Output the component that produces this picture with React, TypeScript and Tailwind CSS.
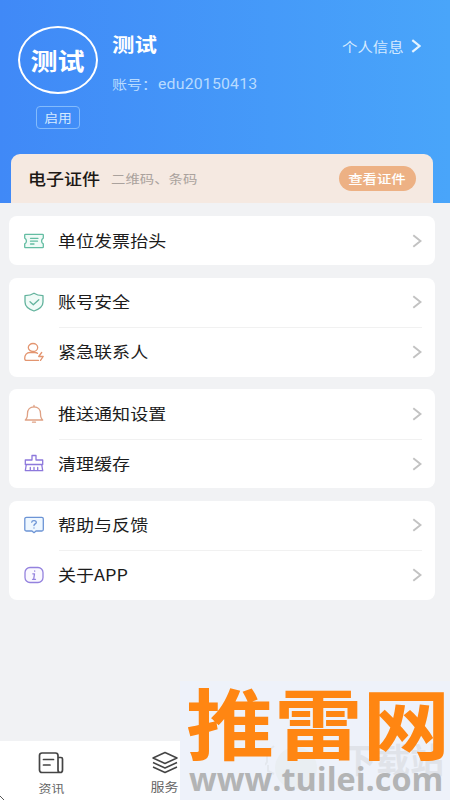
import React from "react";

const cjk = "font-['Noto_Sans_CJK_SC',sans-serif]";

function Wide({ children, className = "" }: { children: React.ReactNode; className?: string }) {
  return <span className={`block origin-left scale-x-[1.15] whitespace-nowrap ${className}`}>{children}</span>;
}

function Chevron({ className = "" }: { className?: string }) {
  return (
    <svg className={`h-[14px] w-[10px] shrink-0 ${className}`} viewBox="0 0 10 14" fill="none" stroke="currentColor">
      <path d="M1.300 1.200 8.500 7l-7.200 5.800" />
    </svg>
  );
}

function Icon({ color, children }: { color: string; children: React.ReactNode }) {
  return (
    <svg className={`h-5 w-[22px] shrink-0 ${color}`} viewBox="0 0 22 20" fill="none" stroke="currentColor" strokeWidth="1.3" strokeLinejoin="round" strokeLinecap="round">
      {children}
    </svg>
  );
}

const ticket = (
  <Icon color="text-[#63bda2]">
    <path d="M2.500 3.300h17c.5 0 .8.300.8.800v3c-2.300 1.200-2.300 4.600 0 5.800v3c0 .5-.3.800-.8.800h-17c-.5 0-.8-.3-.8-.8v-3c2.300-1.200 2.300-4.600 0-5.800v-3c0-.5.3-.8.800-.8z" fill="#f0fbf7" />
    <path d="M7.500 7.300h7.500M7.500 10.200h7M7.500 13h3.500" />
  </Icon>
);
const shield = (
  <Icon color="text-[#63b39d]">
    <path d="M11 1.200c2.500 1.700 5.500 2.300 9 2.500v6.300c0 4.500-4 7.300-9 9-5-1.700-9-4.500-9-9V3.700c3.500-.2 6.500-.8 9-2.500z" fill="#f0fbf7" />
    <path d="m7 9.700 3.300 3 5.500-5" />
  </Icon>
);
const contact = (
  <Icon color="text-[#e39570]">
    <ellipse cx="10" cy="5.500" rx="4.700" ry="4" />
    <path d="M14.500 11.300c-.8-.6-1.600-.8-2.500-.8H7c-3.300 0-5.300 2.500-5.300 6 0 1.200.6 1.900 1.800 1.900h12" />
    <path d="m18.700 10.500-3 4h4.500l-2.700 3.900" />
  </Icon>
);
const bell = (
  <Icon color="text-[#dfa184]">
    <path d="M2.300 16c1.700-1.300 2.200-3 2.200-6.500 0-4 2.500-6.700 6.500-6.700s6.500 2.700 6.500 6.700c0 3.500.5 5.200 2.200 6.500z" />
    <path d="M11 1.500v1.300M9.500 18.200h3" />
  </Icon>
);
const brush = (
  <Icon color="text-[#8d78dc]">
    <path d="M9 7V2.500h4V7h6.700v4.500H2.300V7zM3.300 11.500 2.300 17.700h17.400l-1-6.200M7.300 17.500v-3M11 17.500v-3M14.700 17.500v-3" />
  </Icon>
);
const help = (
  <Icon color="text-[#6c94d5]">
    <path d="M3.500 2.300h15.300c1 0 1.500.5 1.500 1.500v10.700c0 1-.5 1.500-1.500 1.500H13l-2 1.700L9 16H3.500c-1 0-1.700-.5-1.700-1.500V3.800c0-1 .7-1.500 1.700-1.500z" fill="#eef7ff" />
    <path d="M8.700 7.200c.2-2.200 4.600-2.200 4.600.2 0 1.500-2.300 1.500-2.300 3.200M11 13v.1" />
  </Icon>
);
const info = (
  <Icon color="text-[#9482de]">
    <rect x="2" y="2.500" width="18" height="15" rx="5" fill="#faf8ff" />
    <path d="M9.800 8.800h1.700l-.8 5.200M9.500 14.300h3M11.700 6v.2" />
  </Icon>
);

type Item = { icon: React.ReactNode; label: string };

function Group({ items, className }: { items: Item[]; className: string }) {
  return (
    <section className={`flex flex-col rounded-[8px] bg-white pl-[14px] pr-[13px] ${className}`}>
      {items.map((it, i) => (
        <div key={it.label} className="flex min-h-0 flex-1 items-center">
          {it.icon}
          <div className={`ml-[14px] flex h-full flex-1 items-center justify-between ${i > 0 ? "border-t border-[#f1f1f1]" : ""}`}>
            <Wide className="-ml-px text-[15.7px] text-[#1c1c1c]">{it.label}</Wide>
            <Chevron className="stroke-[1.9] text-[#c2c2c2]" />
          </div>
        </div>
      ))}
    </section>
  );
}

export default function App() {
  return (
    <div className={`relative flex h-[800px] w-[450px] flex-col overflow-hidden bg-[#f1f2f4] ${cjk}`}>
      <header className="flex h-[203px] shrink-0 flex-col bg-linear-to-r from-[#4089f7] to-[#49a5fa]">
        <div className="flex h-[154px] pl-[18px]">
          <div className="flex w-[80px] flex-col items-center pt-[26px]">
            <div className="flex h-[68px] w-[80px] items-center justify-center rounded-[50%] border-2 border-white text-[23.5px] font-bold text-white">
              <span className="mt-px mr-[2px] scale-x-[1.15]">测试</span>
            </div>
            <div className="mt-[12px] flex h-[23px] w-[44px] items-center justify-center rounded-[4px] border border-[#83bbfc] text-[12px] text-[#d5eaff]">
              <span className="scale-x-[1.15]">启用</span>
            </div>
          </div>
          <div className="ml-[14px] flex flex-1 flex-col pt-[30px]">
            <Wide className="text-[19.5px] leading-[28px] font-bold text-white">测试</Wide>
            <div className="mt-[16px] flex text-[13px] leading-[20px] text-[#b8dbff]">
              <Wide className="w-[46px]">账号：</Wide>
              <Wide className="font-['Roboto',sans-serif] text-[13.8px] tracking-[0.15px]">edu20150413</Wide>
            </div>
          </div>
          <div className="mt-[36px] mr-[29px] flex h-5 w-[79px] items-center justify-between text-[13.4px] text-[#d5eaff]">
            <Wide>个人信息</Wide>
            <Chevron className="stroke-[2.2] text-[#e4f3ff]" />
          </div>
        </div>
        <div className="mr-[17px] ml-[11px] flex h-[49px] items-center rounded-t-[9px] bg-[#f5e9e1] pr-[17px] pl-[17px]">
          <Wide className="pt-px text-[15.7px] font-medium text-[#1d1916]">电子证件</Wide>
          <Wide className="ml-[20px] pt-px text-[12.5px] text-[#aaa29d]">二维码、条码</Wide>
          <div className="ml-auto flex h-[25px] w-[77px] items-center justify-center rounded-full bg-[#edb184] pt-px text-[12.5px] font-medium text-white">
            <span className="scale-x-[1.15]">查看证件</span>
          </div>
        </div>
      </header>
      <main className="flex flex-1 flex-col gap-[12.5px] pt-[13px] pr-[15px] pl-[9px]">
        <Group className="h-[49px]" items={[{ icon: ticket, label: "单位发票抬头" }]} />
        <Group className="h-[99px]" items={[{ icon: shield, label: "账号安全" }, { icon: contact, label: "紧急联系人" }]} />
        <Group className="h-[99px]" items={[{ icon: bell, label: "推送通知设置" }, { icon: brush, label: "清理缓存" }]} />
        <Group className="h-[99px]" items={[{ icon: help, label: "帮助与反馈" }, { icon: info, label: "关于APP" }]} />
      </main>
      <nav className="flex h-[59px] shrink-0 bg-white text-[11.5px] text-[#666]">
        <div className="flex w-[102px] flex-col items-center pt-[10px]">
          <svg className="h-[24px] w-[28px]" viewBox="0 0 28 24" fill="none" stroke="#444" strokeWidth="1.7" strokeLinejoin="round" strokeLinecap="round">
            <path d="M5 2h13.500c1.500 0 2.500 1 2.500 2.500V19c0 1.600 1 2.500 2.200 2.500H5c-1.500 0-2.500-1-2.500-2.500V4.500C2.500 3 3.500 2 5 2zM21 6.500h3c1 0 1.500.6 1.500 1.500v11c0 1.700-1 2.500-2.300 2.500M6.500 8.500h10M6.500 14h6.500" />
          </svg>
          <span className="mt-[4px] scale-x-[1.12] leading-[18px]">资讯</span>
        </div>
        <div className="flex w-[126px] flex-col items-center pt-[10px]">
          <svg className="h-[24px] w-[28px]" viewBox="0 0 28 24" fill="none" stroke="#444" strokeWidth="1.5" strokeLinejoin="round">
            <path d="m14 1.500 12 5.500-12 5.500L2 7zM2 11.500l12 5.500 12-5.500M2 16l12 5.500L26 16" />
          </svg>
          <span className="mt-[3px] scale-x-[1.12] text-[12.5px] leading-[18px]">服务</span>
        </div>
      </nav>
      <svg className="absolute bottom-0 left-0 h-[5px] w-[5px]" viewBox="0 0 5 5" stroke="#555"><path d="m0 1 4 4" /></svg>
      <div className="absolute top-[681px] left-[180px] h-[119px] w-[270px] overflow-hidden bg-[#eef2fa]">
        <svg className="absolute top-[60px] left-[85px] h-[56px] w-[65px]" viewBox="0 0 65 56" fill="none">
          <circle cx="31" cy="27" r="21" fill="#e9eef2" />
          <path d="M9 5 2 11v10l-2 3M3 24v6l6 3" stroke="#e4e8ee" strokeWidth="2" />
        </svg>
        <div className="absolute top-[60px] left-[162px] text-[34px] leading-[36px] font-bold text-[#e0e3e9]">下载站</div>
        <div className="absolute top-[1px] left-[6px] origin-top-left scale-x-[1.025] scale-y-[0.9] text-[86px] leading-[86px] font-bold whitespace-nowrap text-[#ff8612]">推雷网</div>
        <div className="absolute top-[79px] left-[9px] font-['Open_Sans',sans-serif] text-[32.400px] leading-[36px] font-bold whitespace-nowrap text-[#b3b4b5]">www.tuilei.com</div>
      </div>
    </div>
  );
}
